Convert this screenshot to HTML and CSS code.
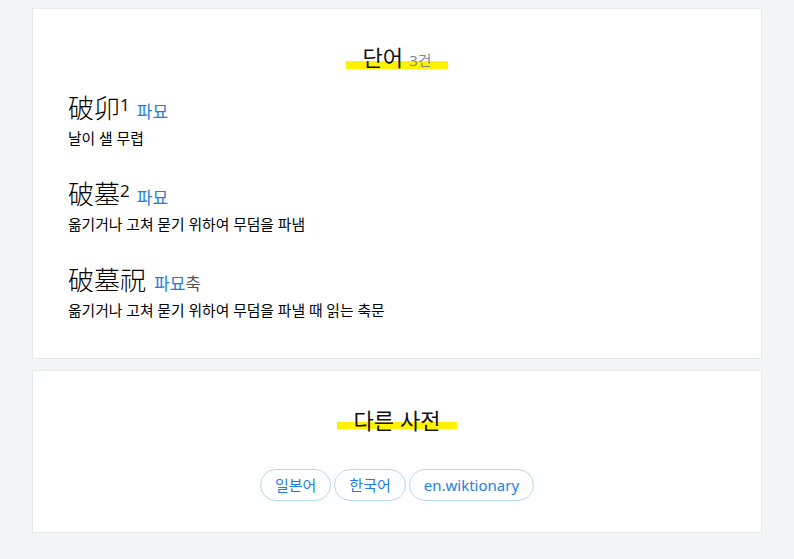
FILE: index.html
```html
<!DOCTYPE html>
<html lang="ko">
<head>
    <meta charset="UTF-8">
    <meta name="viewport" content="width=device-width, initial-scale=1.0">
    <title>破墓 | 사전</title>
    <link rel="stylesheet" href="styles.css">
</head>
<body>

    <section class="card words">
        <h2 class="title"><span class="mark">단어 <small>3건</small></span></h2>

        <div class="entry">
            <div class="head">
                <span class="hanja">破卯</span><sup>1</sup>
                <a class="reading" href="#">파묘</a>
            </div>
            <p class="meaning">날이 샐 무렵</p>
        </div>

        <div class="entry">
            <div class="head">
                <span class="hanja">破墓</span><sup>2</sup>
                <a class="reading" href="#">파묘</a>
            </div>
            <p class="meaning">옮기거나 고쳐 묻기 위하여 무덤을 파냄</p>
        </div>

        <div class="entry">
            <div class="head">
                <span class="hanja">破墓祝</span>
                <span class="reading-wrap"><a class="reading" href="#">파묘</a><span class="rest">축</span></span>
            </div>
            <p class="meaning">옮기거나 고쳐 묻기 위하여 무덤을 파낼 때 읽는 축문</p>
        </div>
    </section>

    <section class="card others">
        <h2 class="title"><span class="mark">다른 사전</span></h2>
        <div class="links">
            <a class="pill" href="#">일본어</a>
            <a class="pill" href="#">한국어</a>
            <a class="pill" href="#">en.wiktionary</a>
        </div>
    </section>

</body>
</html>
```

FILE: styles.css
```css
* {
    margin: 0;
    padding: 0;
    box-sizing: border-box;
}

body {
    background: #f3f4f6;
    color: #111;
    font-family: 'Noto Sans', 'Noto Sans CJK KR', sans-serif;
    padding: 8px 32px;
}

.card {
    background: #fff;
    border: 1px solid #e7e8ea;
    margin-bottom: 11px;
}

.words {
    padding: 33px 35px 37px;
}

.others {
    padding: 34px 35px 31px;
    text-align: center;
}

.title {
    text-align: center;
    font-family: 'Noto Sans CJK KR', sans-serif;
    font-size: 22px;
    font-weight: normal;
    line-height: 28px;
    height: 28px;
}

.mark {
    display: inline-block;
    padding: 0 16px;
    background: linear-gradient(transparent 60%, #fff200 60%, #fff200 85%, transparent 85%);
}

.mark small {
    font-family: 'Noto Sans', 'Noto Sans CJK KR', sans-serif;
    font-size: 15px;
    color: #888;
}

.words .title {
    margin-bottom: 21px;
}

.entry {
    margin-bottom: 28px;
}

.entry:last-child {
    margin-bottom: 0;
}

.head {
    display: flex;
    align-items: baseline;
    height: 32px;
    line-height: 32px;
    white-space: nowrap;
}

.hanja {
    font-size: 26px;
    font-weight: 300;
    color: #000;
    font-family: 'Noto Sans CJK KR', sans-serif;
}

sup {
    font-size: 17px;
    line-height: 1;
    position: relative;
    top: -7px;
}

.reading {
    color: #1f7fe0;
    font-size: 17px;
    text-decoration: none;
    margin-left: 7px;
}

.reading-wrap .reading {
    margin-left: 0;
}

.reading-wrap {
    margin-left: 8px;
}

.rest {
    font-size: 17px;
    color: #555;
}

.meaning {
    font-size: 14.8px;
    line-height: 22px;
    margin-top: 4px;
    color: #000;
}

.links {
    margin-top: 36px;
    font-size: 0;
}

.pill {
    display: inline-block;
    font-size: 15px;
    line-height: 30px;
    padding: 0 14px;
    margin: 0 1.5px;
    color: #1f7fe0;
    text-decoration: none;
    border: 1px solid #b5d8f4;
    border-radius: 16px;
}
```
